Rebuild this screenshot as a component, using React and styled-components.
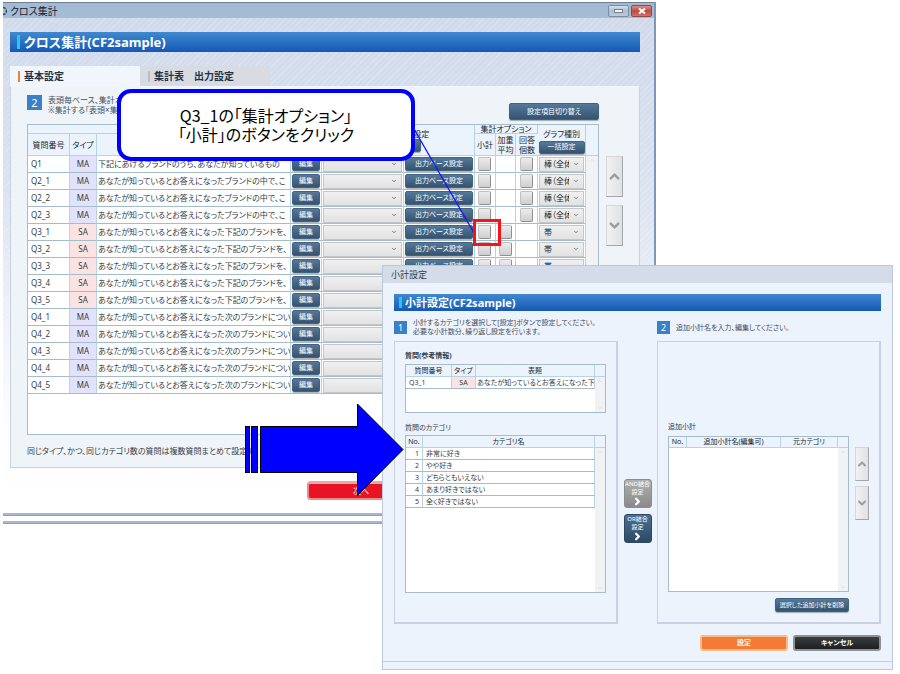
import React from "react";
import styled, { createGlobalStyle, css } from "styled-components";
import { ChevronDown, ChevronRight, ChevronUp } from "lucide-react";

const colors = {
  line: "#a5bccb",
  headLine: "#b9d3e6",
  head: "#ebf3fd",
  ma: "#e2e2fa",
  sa: "#fce3e3",
  text: "#333c46"
};

const GlobalStyle = createGlobalStyle`
  * {
    box-sizing: border-box;
  }

  body {
    margin: 0;
    background: #fff;
    color: ${colors.text};
    font-family: "Noto Sans", "Noto Sans CJK JP", sans-serif;
    font-feature-settings: "palt";
  }

  button,
  select {
    margin: 0;
    padding: 0;
    font: inherit;
    font-feature-settings: inherit;
  }
`;

const Desktop = styled.main`
  position: relative;
  min-height: 100vh;
  overflow: hidden;
`;

/* ---------- main window ---------- */

const MainWindow = styled.section`
  position: absolute;
  top: 2px;
  left: 3px;
  width: calc(100% - 247px);
  border-right: 2px solid #7f97b6;
`;

const TitleBar = styled.header`
  display: flex;
  align-items: center;
  height: 16px;
  background: linear-gradient(#a2b9d3, #a6bdd8);
  border-top: 1px solid #6d8096;
`;

const WindowTitle = styled.h1`
  flex: 1;
  margin: 0 0 0 3px;
  font-size: 10px;
  line-height: 14px;
  font-weight: 400;
  color: #1b222b;
`;

const WindowControl = styled.button`
  display: flex;
  align-items: center;
  justify-content: center;
  width: 21px;
  height: 12px;
  margin-right: 2px;
  border: 1px solid ${props => (props.$close ? "#8c4a4e" : "#7d8ea3")};
  border-radius: 2px;
  background: ${props =>
    props.$close
      ? "linear-gradient(#dc9189, #c4483b 50%, #d27368)"
      : "linear-gradient(#d5dfea, #a9bdd2 50%, #bccddd)"};
`;

const MainBody = styled.div`
  padding: 14px 14px 13px 7px;
  background: repeating-linear-gradient(
      135deg,
      rgba(255, 255, 255, 0.2) 0 1px,
      transparent 1px 4px
    ),
    linear-gradient(#d0daeb, #dbe3f1 35%, #fdfdfe 80%, #fff);
`;

const FrameEdge = styled.div`
  height: 3px;
  margin-bottom: 5px;
  background: #a6b8c9;
  border-bottom: 1px solid #8fa0b0;
`;

const Banner = styled.h2`
  display: flex;
  align-items: center;
  gap: 3px;
  height: ${props => (props.$small ? 17 : 20)}px;
  margin: 0;
  padding-left: ${props => (props.$small ? 5 : 7)}px;
  background: linear-gradient(#4089cf, #1558b5);
  color: #fff;
  font-size: ${props => (props.$small ? 11 : 13)}px;
  line-height: 16px;
  font-weight: 700;

  &::before {
    content: "";
    width: 3px;
    height: ${props => (props.$small ? 11 : 14)}px;
    margin-right: ${props => (props.$small ? 0 : 1)}px;
    background: #1fc8f5;
  }
`;

const Tabs = styled.div`
  display: flex;
  margin-top: 14px;
`;

const Tab = styled.button`
  display: flex;
  align-items: center;
  gap: 4px;
  width: 130px;
  height: 20px;
  padding-left: 8px;
  border: 0;
  background: ${props => (props.$active ? "#f1f6fd" : "#d8dbe1")};
  color: #1f3448;
  font-size: 10px;
  line-height: 12px;
  font-weight: 700;

  &::before {
    content: "";
    width: 2px;
    height: 11px;
    background: ${props => (props.$active ? "#f0813d" : "#bcbfc4")};
  }
`;

const Panel = styled.div`
  display: grid;
  grid-template-columns: 1fr 17px;
  column-gap: 7px;
  padding: 8px 16px 10px;
  background: #eff4f9;
  border: 1px solid #c9d1de;
  border-top-color: #f1f6fd;
`;

const Toolbar = styled.div`
  display: flex;
  justify-content: space-between;
  height: 29px;
  padding-bottom: 4px;
`;

const ToolbarEnd = styled.div`
  align-self: flex-end;
`;

const Step = styled.div`
  display: flex;
  align-items: ${props => (props.$small ? "center" : "flex-start")};
  gap: 6px;
  font-size: ${props => (props.$small ? 7 : 8)}px;
  line-height: ${props => (props.$small ? 9 : 10)}px;
  color: #46515d;

  p {
    margin: 0;
  }
`;

const StepNumber = styled.span`
  display: flex;
  align-items: center;
  justify-content: center;
  width: ${props => (props.$small ? 13 : 15)}px;
  height: ${props => (props.$small ? 13 : 15)}px;
  background: #3a80c9;
  color: #fff;
  font-size: ${props => (props.$small ? 9 : 11)}px;
`;

const NavyButton = styled.button`
  display: block;
  width: ${props => (props.$width ? `${props.$width}px` : "100%")};
  height: ${props => props.$height || 14}px;
  margin: 0 auto;
  border: 1px solid #46617c;
  border-radius: 2px;
  background: linear-gradient(#55799b, #34536f);
  box-shadow: 0 1px 1px rgba(40, 60, 80, 0.4);
  color: #fff;
  font-size: ${props => props.$size || 7}px;
  line-height: 10px;
  white-space: nowrap;
`;

const Table = styled.table`
  width: 100%;
  table-layout: fixed;
  border-collapse: separate;
  border-spacing: 0;
  border: 1px solid ${colors.line};
  background: #fff;
  font-size: ${props => (props.$small ? 7 : 8)}px;
  line-height: 10px;
`;

const Th = styled.th`
  height: ${props => props.$height}px;
  padding: 0;
  background: ${colors.head};
  border-right: 1px solid ${colors.headLine};
  border-bottom: 1px solid ${colors.headLine};
  font-weight: 400;
  color: #20272e;
  vertical-align: middle;
  line-height: ${props => props.$leading || 10}px;

  &:last-child {
    border-right: 0;
  }
`;

const typeColor = css`
  background: ${props => (props.$type === "MA" ? colors.ma : colors.sa)};
  text-align: center;
`;

const Td = styled.td`
  height: ${props => props.$height || 17}px;
  padding: 0 ${props => (props.$tight ? 1 : 3)}px;
  overflow: hidden;
  white-space: nowrap;
  text-align: ${props => props.$align || "left"};
  border-right: 1px solid ${colors.headLine};
  border-bottom: 1px solid ${colors.line};
  ${props => props.$type && typeColor}
`;

const ScrollCell = styled.td`
  padding: 1px 0;
  background: #f1f2f4;
  color: #c3c7cc;
  vertical-align: ${props => (props.$end ? "bottom" : "top")};

  svg {
    display: block;
    margin: 0 auto;
  }
`;

const Filler = styled.td`
  height: ${props => props.$height}px;
  padding: 0;
`;

const SquareButton = styled.button`
  display: block;
  width: 13px;
  height: 14px;
  margin: 0 auto;
  border: 1px solid #c0c0c0;
  border-right-color: #8f8f8f;
  border-bottom-color: #8f8f8f;
  border-radius: 2px;
  background: linear-gradient(#ececec, #cfcfcf);
`;

const SelectBox = styled.span`
  display: grid;
  align-items: center;

  select,
  svg {
    grid-area: 1 / 1;
  }

  svg {
    justify-self: end;
    margin-right: 5px;
    pointer-events: none;
  }
`;

const Select = styled.select`
  width: 100%;
  height: 15px;
  padding: 0 14px 0 4px;
  appearance: none;
  border: 1px solid #c3c6ca;
  border-radius: 0;
  background: linear-gradient(#f0f0f0, #e2e2e2);
  color: #222;
  font-size: 8px;
  line-height: 12px;
`;

const Movers = styled.div`
  display: flex;
  flex-direction: column;
  gap: ${props => (props.$small ? 5 : 8)}px;
  padding-top: ${props => (props.$small ? 11 : 32)}px;
`;

const MoveButton = styled.button`
  display: flex;
  align-items: center;
  justify-content: center;
  width: 100%;
  height: ${props => (props.$small ? 34 : 41)}px;
  border: 1px solid #d4d6d9;
  border-right-color: #a3a6aa;
  border-bottom-color: #a3a6aa;
  background: linear-gradient(90deg, #f2f2f3, #e0e1e3);
  color: #9a9da1;
`;

const Note = styled.p`
  margin: 10px 0 0;
  font-size: 8px;
  line-height: 12px;
`;

const MainFooter = styled.div`
  padding: 13px 0 0 297px;
`;

const NextButton = styled.button`
  display: block;
  width: 108px;
  height: 19px;
  border: 2px solid #ef8a88;
  border-top: 3px solid #e9aaa4;
  border-radius: 4px;
  background: #e81425;
  color: #fff;
  font-size: 8px;
  line-height: 12px;
`;

/* ---------- subtotal dialog ---------- */

const Dialog = styled.section`
  position: absolute;
  top: 265px;
  left: 382px;
  right: 7px;
  padding-bottom: 7px;
  background: #ecf3fd;
  border: 1px solid #bcc7d9;
`;

const DialogTitle = styled.h1`
  margin: 0;
  padding-left: 8px;
  background: #d4dcea;
  font-size: 9px;
  line-height: 17px;
  font-weight: 400;
`;

const DialogBody = styled.div`
  padding: 11px 11px 10px;
  border-bottom: 1px solid #c3cee0;
`;

const DialogColumns = styled.div`
  display: grid;
  grid-template-columns: 1fr 39px 1fr;
  margin-top: 7px;
`;

const StepSlot = styled.div`
  display: flex;
  align-items: center;
  height: 18px;
  margin-bottom: 5px;
`;

const Box = styled.div`
  height: 283px;
  padding: ${props => props.$top}px 10px 0;
  border: 1px solid #c8d1df;
  border-width: 1px 2px 2px 1px;
`;

const Caption = styled.h3`
  margin: 0 0 ${props => props.$gap}px;
  font-size: 7px;
  line-height: 10px;
  font-weight: ${props => (props.$bold ? 700 : 400)};
`;

const Spacer = styled.div`
  height: 10px;
`;

const JoinButtons = styled.div`
  display: flex;
  flex-direction: column;
  align-items: center;
  gap: 6px;
  padding-top: 161px;
`;

const JoinButton = styled.button`
  display: flex;
  flex-direction: column;
  align-items: center;
  width: 28px;
  height: 29px;
  border: 1px solid ${props => (props.$muted ? "#8c8c8c" : "#2c4963")};
  border-radius: 3px;
  background: ${props =>
    props.$muted
      ? "linear-gradient(#b0b0b0, #8a8a8a)"
      : "linear-gradient(#4c7093, #2b4964)"};
  color: #fff;
  font-size: 6px;
  line-height: 8px;
  white-space: nowrap;
`;

const ListRow = styled.div`
  display: grid;
  grid-template-columns: 1fr 14px;
  column-gap: 6px;
`;

const DeleteRow = styled.div`
  display: flex;
  justify-content: flex-end;
  padding: 6px 20px 0 0;

  button {
    margin: 0;
  }
`;

const DialogFooter = styled.div`
  display: flex;
  justify-content: flex-end;
  gap: 5px;
  padding-top: 11px;
`;

const DialogButton = styled.button`
  width: 88px;
  height: 16px;
  border: 2px solid ${props => (props.$primary ? "#f9b98a" : "#8e9092")};
  border-radius: 3px;
  background: ${props =>
    props.$primary ? "#f47b35" : "linear-gradient(#3a3d40, #1d2023)"};
  color: #fff;
  font-size: 7px;
  line-height: 10px;
  font-weight: 700;
`;

/* ---------- annotations over the windows ---------- */

const Callout = styled.p`
  position: absolute;
  top: 89px;
  left: 117px;
  width: 298px;
  height: 72px;
  margin: 0;
  padding: 13px 0 0;
  border: 4px solid #0000ff;
  border-radius: 14px;
  background: #fff;
  color: #000;
  font-family: "Noto Sans CJK JP", sans-serif;
  font-size: 16px;
  line-height: 19px;
  text-align: center;
`;

const Marks = styled.svg`
  position: absolute;
  top: 0;
  left: 0;
  pointer-events: none;
`;

const subject = "あなたが知っているとお答えになった";

const questions = [
  { id: "Q1", type: "MA", title: "下記にあげるブランドのうち、あなたが知っているもの", options: true },
  { id: "Q2_1", type: "MA", title: `${subject}ブランドの中で、こ`, options: true },
  { id: "Q2_2", type: "MA", title: `${subject}ブランドの中で、こ`, options: true },
  { id: "Q2_3", type: "MA", title: `${subject}ブランドの中で、こ`, options: true },
  { id: "Q3_1", type: "SA", title: `${subject}下記のブランドを、`, options: true },
  { id: "Q3_2", type: "SA", title: `${subject}下記のブランドを、`, options: true },
  { id: "Q3_3", type: "SA", title: `${subject}下記のブランドを、`, options: true },
  { id: "Q3_4", type: "SA", title: `${subject}下記のブランドを、` },
  { id: "Q3_5", type: "SA", title: `${subject}下記のブランドを、` },
  { id: "Q4_1", type: "MA", title: `${subject}次のブランドについ` },
  { id: "Q4_2", type: "MA", title: `${subject}次のブランドについ` },
  { id: "Q4_3", type: "MA", title: `${subject}次のブランドについ` },
  { id: "Q4_4", type: "MA", title: `${subject}次のブランドについ` },
  { id: "Q4_5", type: "MA", title: `${subject}次のブランドについ` }
];

const categories = [
  "非常に好き",
  "やや好き",
  "どちらともいえない",
  "あまり好きではない",
  "全く好きではない"
];

const Columns = ({ widths }) => (
  <colgroup>
    {widths.map((width, i) => (
      <col key={i} style={width ? { width } : undefined} />
    ))}
  </colgroup>
);

const ScrollUp = ({ rows }) => (
  <ScrollCell rowSpan={rows}>
    <ChevronUp size={6} />
  </ScrollCell>
);

const ScrollDown = () => (
  <ScrollCell $end>
    <ChevronDown size={6} />
  </ScrollCell>
);

const DropDown = ({ label, options }) => (
  <SelectBox>
    <Select aria-label={label}>
      {options.map(option => (
        <option key={option}>{option}</option>
      ))}
    </Select>
    <ChevronDown size={6} strokeWidth={3} color="#555" />
  </SelectBox>
);

const MoveButtons = ({ small }) => (
  <Movers $small={small}>
    <MoveButton $small={small} aria-label="上へ">
      <ChevronUp size={small ? 14 : 17} strokeWidth={4} />
    </MoveButton>
    <MoveButton $small={small} aria-label="下へ">
      <ChevronDown size={small ? 14 : 17} strokeWidth={4} />
    </MoveButton>
  </Movers>
);

const QuestionRow = ({ question, children }) => {
  const { id, type, title, options } = question;
  return (
    <tr>
      <Td>{id}</Td>
      <Td $type={type}>{type}</Td>
      <Td $tight>{title}</Td>
      <Td $tight>
        <NavyButton>編集</NavyButton>
      </Td>
      <Td $tight>
        <DropDown label={`${id} 出力ベース`} options={[""]} />
      </Td>
      <Td $tight>{options && <NavyButton>出力ベース設定</NavyButton>}</Td>
      <Td $tight>{options && <SquareButton aria-label={`${id} 小計`} />}</Td>
      <Td $tight>
        {options && type === "SA" && <SquareButton aria-label={`${id} 加重平均`} />}
      </Td>
      <Td $tight>
        {options && type === "MA" && <SquareButton aria-label={`${id} 回答個数`} />}
      </Td>
      <Td $tight>
        {options && (
          <DropDown
            label={`${id} グラフ種別`}
            options={[type === "MA" ? "棒（全体）" : "帯"]}
          />
        )}
      </Td>
      {children}
    </tr>
  );
};

const QuestionTable = () => (
  <div>
    <Table>
      <Columns widths={[42, 27, 0, 31, 82, 71, 21, 20, 22, 48, 12]} />
      <thead>
        <tr>
          <Th colSpan={4} rowSpan={2} />
          <Th colSpan={2} rowSpan={3}>
            出力ベースの設定
            <NavyButton $width={46} $height={13}>一括設定</NavyButton>
          </Th>
          <Th colSpan={3} $height={9} $leading={8}>
            集計オプション
          </Th>
          <Th rowSpan={3} $leading={14}>
            グラフ種別
            <NavyButton $width={46} $height={13}>一括設定</NavyButton>
          </Th>
          <Th rowSpan={3} />
        </tr>
        <tr>
          <Th rowSpan={2} $height={22}>小計</Th>
          <Th rowSpan={2}>加重<br />平均</Th>
          <Th rowSpan={2}>回答<br />個数</Th>
        </tr>
        <tr>
          <Th $height={17}>質問番号</Th>
          <Th>タイプ</Th>
          <Th aria-label="表題" />
          <Th />
        </tr>
      </thead>
      <tbody>
        {questions.map((question, i) => (
          <QuestionRow key={question.id} question={question}>
            {i === 0 && <ScrollUp rows={questions.length} />}
          </QuestionRow>
        ))}
        <tr>
          <Filler colSpan={10} $height={40} />
          <ScrollDown />
        </tr>
      </tbody>
    </Table>
  </div>
);

const CrossTabWindow = () => (
  <MainWindow>
    <TitleBar>
      <svg width="4" height="10" viewBox="0 0 4 10">
        <path d="M0 1.5 A3.5 3.5 0 0 1 0 8.5" fill="none" stroke="#2c4a6b" strokeWidth="1.6" strokeDasharray="3 1" />
      </svg>
      <WindowTitle>クロス集計</WindowTitle>
      <WindowControl aria-label="最小化">
        <svg width="9" height="4" viewBox="0 0 9 4">
          <rect x="0.5" y="0.5" width="8" height="3" fill="#f4f4f4" stroke="#76828f" />
        </svg>
      </WindowControl>
      <WindowControl $close aria-label="閉じる">
        <svg width="8" height="6" viewBox="0 0 8 6">
          <path d="M1 0.5 L7 5.5 M7 0.5 L1 5.5" stroke="#fff" strokeWidth="2" />
        </svg>
      </WindowControl>
    </TitleBar>
    <MainBody>
      <Banner>クロス集計(CF2sample)</Banner>
      <Tabs>
        <Tab $active>基本設定</Tab>
        <Tab>集計表　出力設定</Tab>
      </Tabs>
      <Panel>
        <Toolbar>
          <Step>
            <StepNumber>2</StepNumber>
            <p>
              表頭毎ベース、集計オ
              <br />
              ※集計する「表頭×集
            </p>
          </Step>
          <ToolbarEnd>
            <NavyButton $width={90} $height={17}>設定項目切り替え</NavyButton>
          </ToolbarEnd>
        </Toolbar>
        <span />
        <QuestionTable />
        <MoveButtons />
        <Note>同じタイプ、かつ、同じカテゴリ数の質問は複数質問まとめて設定で</Note>
      </Panel>
      <MainFooter>
        <NextButton>次へ</NextButton>
      </MainFooter>
    </MainBody>
    <FrameEdge />
    <FrameEdge />
  </MainWindow>
);

const SubtotalDialog = () => (
  <Dialog>
    <DialogTitle>小計設定</DialogTitle>
    <DialogBody>
      <Banner $small>小計設定(CF2sample)</Banner>
      <DialogColumns>
        <div>
          <StepSlot>
            <Step $small>
              <StepNumber $small>1</StepNumber>
              <p>
                小計するカテゴリを選択して[設定]ボタンで設定してください。
                <br />
                必要な小計数分、繰り返し設定を行います。
              </p>
            </Step>
          </StepSlot>
          <Box $top={9}>
            <Caption $bold $gap={3}>質問(参考情報)</Caption>
            <Table $small>
              <Columns widths={[46, 24, 0, 10]} />
              <thead>
                <tr>
                  <Th $height={12}>質問番号</Th>
                  <Th>タイプ</Th>
                  <Th>表題</Th>
                  <Th />
                </tr>
              </thead>
              <tbody>
                <tr>
                  <Td $height={12}>Q3_1</Td>
                  <Td $height={12} $type="SA">SA</Td>
                  <Td $height={12} $tight>{subject}下</Td>
                  <ScrollUp rows={1} />
                </tr>
                <tr>
                  <Filler colSpan={3} $height={23} />
                  <ScrollDown />
                </tr>
              </tbody>
            </Table>
            <Spacer />
            <Caption $gap={2}>質問のカテゴリ</Caption>
            <Table $small>
              <Columns widths={[17, 0, 10]} />
              <thead>
                <tr>
                  <Th $height={12}>No.</Th>
                  <Th>カテゴリ名</Th>
                  <Th />
                </tr>
              </thead>
              <tbody>
                {categories.map((name, i) => (
                  <tr key={name}>
                    <Td $height={12} $align="right">{i + 1}</Td>
                    <Td $height={12}>{name}</Td>
                    {i === 0 && <ScrollUp rows={categories.length} />}
                  </tr>
                ))}
                <tr>
                  <Filler colSpan={2} $height={84} />
                  <ScrollDown />
                </tr>
              </tbody>
            </Table>
          </Box>
        </div>
        <JoinButtons>
          <JoinButton $muted>
            AND結合
            <span>設定</span>
            <ChevronRight size={11} strokeWidth={5} />
          </JoinButton>
          <JoinButton>
            OR結合
            <span>設定</span>
            <ChevronRight size={11} strokeWidth={5} />
          </JoinButton>
        </JoinButtons>
        <div>
          <StepSlot>
            <Step $small>
              <StepNumber $small>2</StepNumber>
              <p>追加小計名を入力、編集してください。</p>
            </Step>
          </StepSlot>
          <Box $top={80}>
            <Caption $gap={4}>追加小計</Caption>
            <ListRow>
              <Table $small>
                <Columns widths={[18, 0, 57, 10]} />
                <thead>
                  <tr>
                    <Th $height={11}>No.</Th>
                    <Th>追加小計名(編集可)</Th>
                    <Th>元カテゴリ</Th>
                    <Th />
                  </tr>
                </thead>
                <tbody>
                  <tr>
                    <Filler colSpan={3} $height={71} />
                    <ScrollUp rows={1} />
                  </tr>
                  <tr>
                    <Filler colSpan={3} $height={72} />
                    <ScrollDown />
                  </tr>
                </tbody>
              </Table>
              <MoveButtons small />
            </ListRow>
            <DeleteRow>
              <NavyButton $width={74} $size={6}>選択した追加小計を削除</NavyButton>
            </DeleteRow>
          </Box>
        </div>
      </DialogColumns>
      <DialogFooter>
        <DialogButton $primary>設定</DialogButton>
        <DialogButton>キャンセル</DialogButton>
      </DialogFooter>
    </DialogBody>
  </Dialog>
);

const App = () => {
  return (
    <>
      <GlobalStyle />
      <Desktop>
        <CrossTabWindow />
        <SubtotalDialog />
        <Callout>
          Q3_1の「集計オプション」
          <br />
          「小計」のボタンをクリック
        </Callout>
        <Marks width="520" height="500" viewBox="0 0 520 500">
          <path d="M414 129 L474 233" stroke="#1414ff" strokeWidth="1.3" />
          <rect x="474.5" y="220.5" width="25" height="24" fill="none" stroke="#f5141e" strokeWidth="3" />
          <g fill="#0000ff" stroke="#000" strokeWidth="1">
            <rect x="245.5" y="426.5" width="4" height="46" />
            <rect x="251.5" y="426.5" width="6" height="46" />
            <path d="M260.5 426.5 H357.5 V404 L403 449.5 L357.5 495.5 V472.5 H260.5 Z" />
          </g>
        </Marks>
      </Desktop>
    </>
  );
};

export default App;
